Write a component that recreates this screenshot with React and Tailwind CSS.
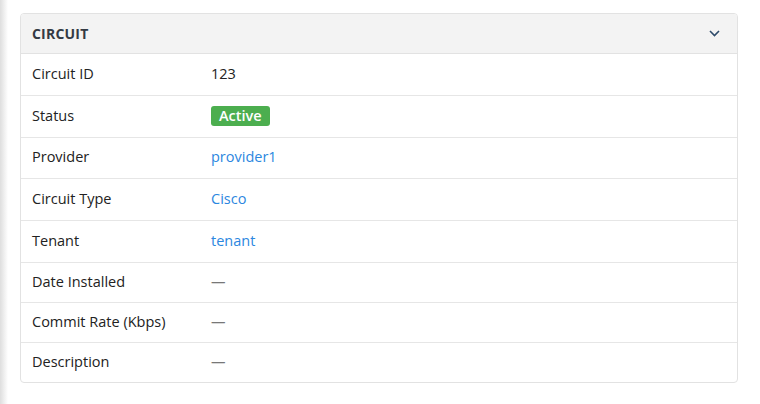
import React from 'react';

const rows = [
  { label: 'Circuit ID', value: '123', h: 'h-[42px]' },
  { label: 'Status', badge: 'Active', h: 'h-[42px]' },
  { label: 'Provider', link: 'provider1', h: 'h-[41px]' },
  { label: 'Circuit Type', link: 'Cisco', h: 'h-[42px]' },
  { label: 'Tenant', link: 'tenant', h: 'h-[42px]' },
  { label: 'Date Installed', empty: true, h: 'h-[40px]' },
  { label: 'Commit Rate (Kbps)', empty: true, h: 'h-[40px]' },
  { label: 'Description', empty: true, h: 'h-[39px]' },
];

const Value = ({ row }) => {
  if (row.badge) {
    return (
      <span className="rounded-[3px] bg-[#4cae4f] px-[8px] pb-[1px] text-[14.5px] font-semibold leading-[17px] text-white">
        {row.badge}
      </span>
    );
  }
  if (row.link) {
    return <a className="text-[#2c87e0]">{row.link}</a>;
  }
  if (row.empty) {
    return <span className="text-[#777]">—</span>;
  }
  return <span>{row.value}</span>;
};

const App = () => {
  return (
    <div className="flex min-h-[404px] bg-white font-['Open_Sans',sans-serif] text-[#222]">
      {/* sidebar shadow */}
      <div className="w-[8px] shrink-0 bg-gradient-to-r from-[#dedede] to-white"></div>

      <div className="flex-1 pl-[12px] pr-[22px] pt-[13px]">
        <div className="overflow-hidden rounded-[4px] border border-[#e2e2e2]">
          <div className="flex h-[40px] items-center justify-between border-b border-[#e2e2e2] bg-[#f3f3f3] pb-[1px] pl-[11px] pr-[17px]">
            <span className="text-[14px] font-bold tracking-[0.2px] text-[#333a44]">CIRCUIT</span>
            <svg width="11" height="7" viewBox="0 0 11 7" fill="none">
              <path d="M1 1l4.5 4.5L10 1" stroke="#2d4a6a" strokeWidth="1.6" />
            </svg>
          </div>
          {rows.map((row, i) => (
            <div
              key={row.label}
              className={`flex items-center pb-[2px] text-[14.5px] ${row.h} ${i < rows.length - 1 ? 'border-b border-[#e6e6e6]' : ''}`}
            >
              <div className="w-[190px] pl-[11px]">{row.label}</div>
              <div className="flex-1">
                <Value row={row} />
              </div>
            </div>
          ))}
        </div>
      </div>
    </div>
  );
};

export default App;
